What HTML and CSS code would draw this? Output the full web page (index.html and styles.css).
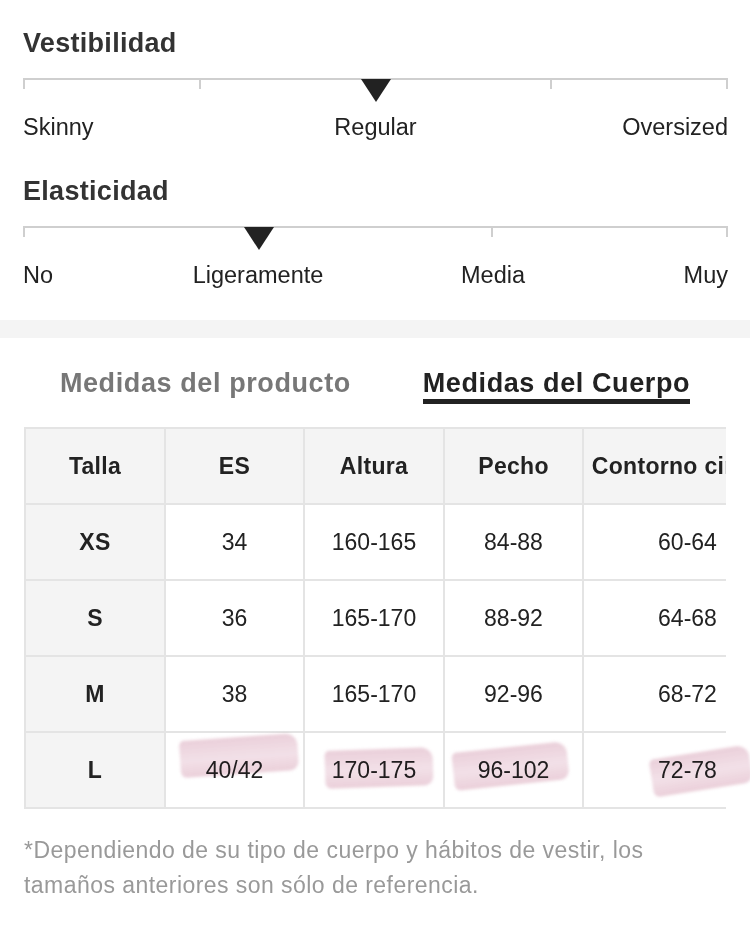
FILE: index.html
```html
<!DOCTYPE html>
<html lang="es">
<head>
<meta charset="utf-8">
<title>Guía de tallas</title>
<link rel="stylesheet" href="styles.css">
</head>
<body>
<div class="fit">
  <section class="meter">
    <h2 class="meter-title">Vestibilidad</h2>
    <div class="scale">
      <div class="seg seg-1"></div>
      <div class="seg seg-2"></div>
      <div class="seg seg-1"></div>
      <span class="marker marker-half"></span>
    </div>
    <div class="labels labels-3">
      <span class="lab lab-start">Skinny</span>
      <span class="lab lab-mid">Regular</span>
      <span class="lab lab-end">Oversized</span>
    </div>
  </section>
  <section class="meter meter-next">
    <h2 class="meter-title">Elasticidad</h2>
    <div class="scale">
      <div class="seg seg-2"></div>
      <div class="seg seg-1"></div>
      <span class="marker marker-third"></span>
    </div>
    <div class="labels labels-4">
      <span class="lab lab-no">No</span>
      <span class="lab lab-lig">Ligeramente</span>
      <span class="lab lab-med">Media</span>
      <span class="lab lab-muy">Muy</span>
    </div>
  </section>
</div>

<div class="band"></div>

<nav class="tabs">
  <span class="tab">Medidas del producto</span>
  <span class="tab tab-active">Medidas del Cuerpo</span>
</nav>

<div class="table-wrap">
  <div class="table-clip">
    <div class="grid">
      <div class="cell head side">Talla</div>
      <div class="cell head">ES</div>
      <div class="cell head">Altura</div>
      <div class="cell head">Pecho</div>
      <div class="cell head">Contorno cintura</div>

      <div class="cell side strong">XS</div>
      <div class="cell">34</div>
      <div class="cell">160-165</div>
      <div class="cell">84-88</div>
      <div class="cell">60-64</div>

      <div class="cell side strong">S</div>
      <div class="cell">36</div>
      <div class="cell">165-170</div>
      <div class="cell">88-92</div>
      <div class="cell">64-68</div>

      <div class="cell side strong">M</div>
      <div class="cell">38</div>
      <div class="cell">165-170</div>
      <div class="cell">92-96</div>
      <div class="cell">68-72</div>

      <div class="cell side strong">L</div>
      <div class="cell">40/42</div>
      <div class="cell">170-175</div>
      <div class="cell">96-102</div>
      <div class="cell">72-78</div>
    </div>
  </div>
  <span class="hl hl-1"></span>
  <span class="hl hl-2"></span>
  <span class="hl hl-3"></span>
  <span class="hl hl-4"></span>
</div>

<p class="note">*Dependiendo de su tipo de cuerpo y hábitos de vestir, los tamaños anteriores son sólo de referencia.</p>
</body>
</html>
```

FILE: styles.css
```css
* { box-sizing: border-box; }

html, body {
  margin: 0;
  padding: 0;
  background: #fff;
}

body {
  font-family: "Liberation Sans", Arial, Helvetica, sans-serif;
  color: #222;
  width: 750px;
}

.fit {
  padding: 27px 22px 0 23px;
}

.meter-next {
  margin-top: 34px;
}

.meter-title {
  margin: 0;
  font-size: 27px;
  line-height: 32px;
  font-weight: 700;
  letter-spacing: 0.3px;
  color: #333;
}

.scale {
  position: relative;
  display: flex;
  margin-top: 19px;
}

.seg {
  height: 11px;
  border-top: 2px solid #cfcfcf;
  border-left: 2px solid #cfcfcf;
}

.seg:last-of-type {
  border-right: 2px solid #cfcfcf;
}

.seg-1 { flex: 1 1 0; }
.seg-2 { flex: 2 1 0; }

.marker {
  position: absolute;
  top: 1px;
  width: 0;
  height: 0;
  border-left: 15px solid transparent;
  border-right: 15px solid transparent;
  border-top: 23px solid #222;
}

.marker-half { left: calc(50% - 15px); }
.marker-third { left: calc(33.333% - 14px); }

.labels {
  display: grid;
  margin-top: 24px;
  font-size: 23.5px;
  line-height: 28px;
  color: #222;
}

.labels-3 {
  grid-template-columns: 1fr auto 1fr;
}

.labels-3 .lab-start { justify-self: start; }
.labels-3 .lab-mid { justify-self: center; }
.labels-3 .lab-end { justify-self: end; }

.labels-4 {
  grid-template-columns: repeat(6, 1fr);
}

.lab-no { grid-column: 1; justify-self: start; }
.lab-lig { grid-column: 2 / span 2; justify-self: center; }
.lab-med { grid-column: 4 / span 2; justify-self: center; }
.lab-muy { grid-column: 6; justify-self: end; }

.band {
  margin-top: 31px;
  height: 18px;
  background: #f4f4f4;
}

.tabs {
  display: flex;
  justify-content: space-around;
  align-items: flex-start;
  padding: 0 24px;
  margin-top: 29px;
}

.tab {
  font-size: 27px;
  line-height: 32px;
  font-weight: 700;
  letter-spacing: 0.6px;
  color: #777;
  border-bottom: 5px solid transparent;
}

.tab-active {
  color: #222;
  border-bottom-color: #222;
}

.table-wrap {
  position: relative;
  margin: 23px 24px 0;
}

.table-clip {
  overflow: hidden;
}

.grid {
  display: grid;
  grid-template-columns: 142px 139px 140px 139px 209px;
  width: max-content;
  border-top: 2px solid #e4e4e4;
}

.cell {
  height: 76px;
  display: flex;
  align-items: center;
  justify-content: center;
  border-right: 2px solid #e4e4e4;
  border-bottom: 2px solid #e4e4e4;
  font-size: 23px;
  color: #222;
  background: #fff;
  white-space: nowrap;
}

.cell.side {
  border-left: 2px solid #e4e4e4;
  background: #f4f4f4;
}

.cell.head {
  background: #f4f4f4;
  font-size: 23px;
  font-weight: 700;
  letter-spacing: 0.3px;
}

.cell.strong {
  font-weight: 700;
  font-size: 23px;
  letter-spacing: 0.3px;
}

.hl {
  position: absolute;
  height: 38px;
  border-radius: 5px 12px 9px 6px;
  background: linear-gradient(180deg, rgba(205, 140, 165, 0.42), rgba(215, 160, 182, 0.32) 55%, rgba(205, 140, 165, 0.42));
  filter: blur(1.8px);
  mix-blend-mode: multiply;
  pointer-events: none;
}

.hl-1 { left: 156px; top: 310px; width: 118px; height: 37px; transform: rotate(-4deg); }
.hl-2 { left: 301px; top: 322px; width: 108px; transform: rotate(-2deg); }
.hl-3 { left: 429px; top: 320px; width: 115px; transform: rotate(-6deg); }
.hl-4 { left: 627px; top: 325px; width: 100px; transform: rotate(-9deg); }

.note {
  margin: 24px 0 0;
  padding: 0 24px;
  font-size: 23px;
  line-height: 35px;
  letter-spacing: 0.45px;
  color: #999;
}
```
